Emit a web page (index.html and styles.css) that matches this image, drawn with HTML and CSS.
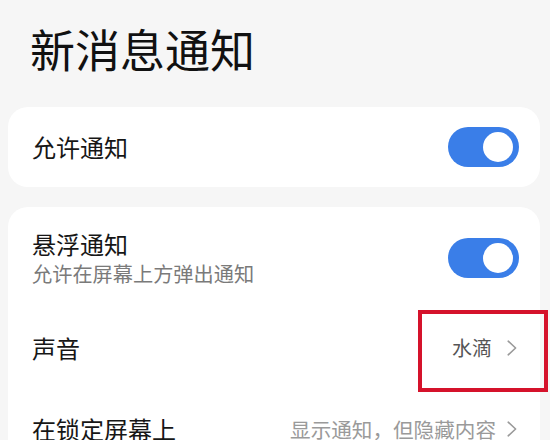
FILE: index.html
```html
<!DOCTYPE html>
<html lang="zh-CN">
<head>
<meta charset="utf-8">
<title>新消息通知</title>
<link rel="stylesheet" href="styles.css">
</head>
<body>
<div class="page">
  <h1 class="title">新消息通知</h1>

  <div class="card">
    <div class="row row-single">
      <span class="label">允许通知</span>
      <span class="toggle on"><span class="knob"></span></span>
    </div>
  </div>

  <div class="card card-list">
    <div class="row row-float">
      <div class="texts">
        <div class="label">悬浮通知</div>
        <div class="sub">允许在屏幕上方弹出通知</div>
      </div>
      <span class="toggle on"><span class="knob"></span></span>
    </div>
    <div class="row row-sound">
      <span class="label">声音</span>
      <span class="value value-dark">水滴<svg class="chev" viewBox="0 0 10 16" width="10" height="16"><path d="M1.2 1.2 L8.6 8 L1.2 14.8" fill="none" stroke="#9a9a9a" stroke-width="1.6" stroke-linecap="round" stroke-linejoin="round"/></svg></span>
    </div>
    <div class="row row-lock">
      <span class="label">在锁定屏幕上</span>
      <span class="value value-light">显示通知，但隐藏内容<svg class="chev chev-tight" viewBox="0 0 10 16" width="10" height="16"><path d="M1.2 1.2 L8.6 8 L1.2 14.8" fill="none" stroke="#9a9a9a" stroke-width="1.6" stroke-linecap="round" stroke-linejoin="round"/></svg></span>
    </div>
  </div>

  <div class="highlight"></div>
</div>
</body>
</html>
```

FILE: styles.css
```css
html, body {
  margin: 0;
  padding: 0;
  background: #f6f6f6;
}

body {
  width: 550px;
  height: 440px;
  overflow: hidden;
  font-family: "Noto Sans CJK SC", "Noto Sans", sans-serif;
  color: #161616;
}

.page {
  position: relative;
  width: 550px;
  height: 440px;
  overflow: hidden;
}

.title {
  margin: 0;
  padding: 21px 0 30px 30px;
  font-size: 45px;
  line-height: 56px;
  font-weight: 400;
  color: #111;
}

.card {
  background: #ffffff;
  border-radius: 20px;
  margin: 0 10px 20px 8px;
}

.row {
  display: flex;
  align-items: center;
  justify-content: space-between;
  padding: 0 21px 0 24px;
}

.row-single {
  height: 80px;
}

.label {
  font-size: 24px;
  line-height: 32px;
  color: #161616;
}

.row-float {
  padding-top: 21px;
  padding-bottom: 15px;
}

.texts {
  display: flex;
  flex-direction: column;
}

.sub {
  font-size: 20.2px;
  line-height: 28px;
  color: #7a7a7a;
}

.row-sound {
  height: 90px;
  padding-right: 23px;
}

.row-lock {
  height: 72px;
  padding-right: 23px;
}

.value {
  display: flex;
  align-items: center;
  font-size: 20px;
  line-height: 28px;
}

.value-dark {
  color: #555;
}

.value-light {
  color: #9a9a9a;
  font-size: 20.6px;
}

.chev {
  margin-left: 15px;
  display: block;
}

.chev-tight {
  margin-left: 11px;
}

.toggle {
  position: relative;
  display: block;
  width: 71px;
  height: 40px;
  border-radius: 20px;
  background: #3a7ee8;
}

.knob {
  position: absolute;
  right: 6px;
  top: 5px;
  width: 30px;
  height: 30px;
  border-radius: 50%;
  background: #ffffff;
}

.highlight {
  position: absolute;
  left: 418px;
  top: 310px;
  width: 130px;
  height: 82px;
  box-sizing: border-box;
  border: 4px solid #d5122b;
}
```
